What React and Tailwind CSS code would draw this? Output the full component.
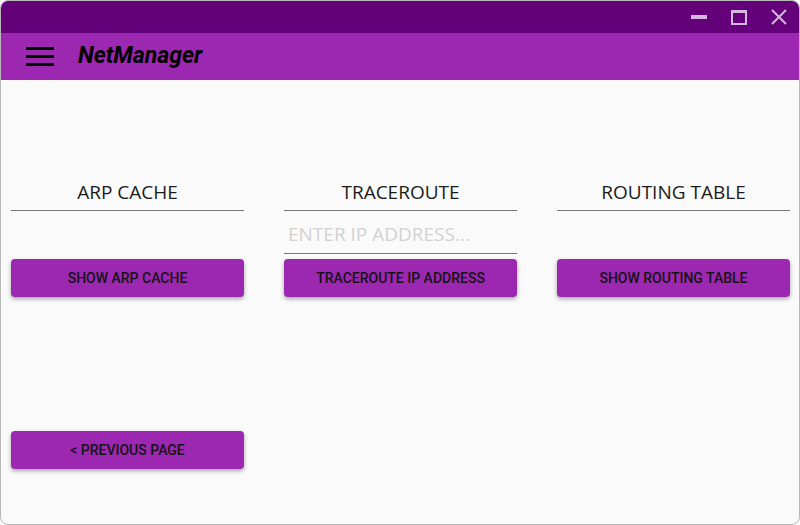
import React from "react";

function Header({ title }) {
  return (
    <div className="h-[131px] flex flex-col justify-end">
      <div className="border-b border-[#767676] pb-[6px] text-center text-[19px] leading-[24px] text-[#1b1b1b] font-['Open_Sans',sans-serif]">
        {title}
      </div>
    </div>
  );
}

function Btn({ children }) {
  return (
    <button className="h-[38px] w-full rounded-[4px] bg-[#9c27b0] text-[14px] font-medium text-[#141414] shadow-[0_2px_4px_rgba(0,0,0,0.35)] font-['Roboto',sans-serif]">
      {children}
    </button>
  );
}

export default function App() {
  return (
    <div className="w-[800px] h-[525px] bg-white">
      <div className="w-full h-full rounded-[8px] overflow-hidden border border-[#b8b8b8] flex flex-col bg-[#fafafa]">
        <div className="h-[32px] bg-[#65007b] flex items-center justify-end shrink-0">
          <div className="w-[40px] flex justify-center">
            <div className="w-[16px] h-[4px] bg-[#d6b6de]" />
          </div>
          <div className="w-[40px] flex justify-center">
            <div className="w-[16px] h-[15px] border-2 border-t-[3px] border-[#d6b6de]" />
          </div>
          <div className="w-[40px] flex justify-center">
            <svg width="16" height="16" viewBox="0 0 16 16">
              <path d="M1 1L15 15M15 1L1 15" stroke="#d6b6de" strokeWidth="2" />
            </svg>
          </div>
        </div>
        <div className="h-[47px] bg-[#9c27b0] flex items-center shrink-0">
          <div className="ml-[25px] w-[28px] flex flex-col gap-[5px]">
            <div className="h-[3px] bg-black" />
            <div className="h-[3px] bg-black" />
            <div className="h-[3px] bg-black" />
          </div>
          <div className="ml-[24px] text-[23px] font-bold italic text-black font-['Roboto',sans-serif]">
            NetManager
          </div>
        </div>
        <div className="flex-1 pl-[10px] pr-[9px]">
          <div className="grid grid-cols-3 gap-x-[40px]">
            <div className="flex flex-col">
              <Header title="ARP CACHE" />
              <div className="h-[48px]" />
              <Btn>SHOW ARP CACHE</Btn>
            </div>
            <div className="flex flex-col">
              <Header title="TRACEROUTE" />
              <input
                placeholder="ENTER IP ADDRESS..."
                className="h-[43px] w-full bg-transparent border-b border-[#767676] px-[4px] pt-[4px] text-[19px] outline-none placeholder:text-[#d2d2d2] font-['Open_Sans',sans-serif]"
              />
              <div className="h-[5px]" />
              <Btn>TRACEROUTE IP ADDRESS</Btn>
            </div>
            <div className="flex flex-col">
              <Header title="ROUTING TABLE" />
              <div className="h-[48px]" />
              <Btn>SHOW ROUTING TABLE</Btn>
            </div>
          </div>
          <div className="mt-[134px] grid grid-cols-3 gap-x-[40px]">
            <Btn>&lt; PREVIOUS PAGE</Btn>
          </div>
        </div>
      </div>
    </div>
  );
}
